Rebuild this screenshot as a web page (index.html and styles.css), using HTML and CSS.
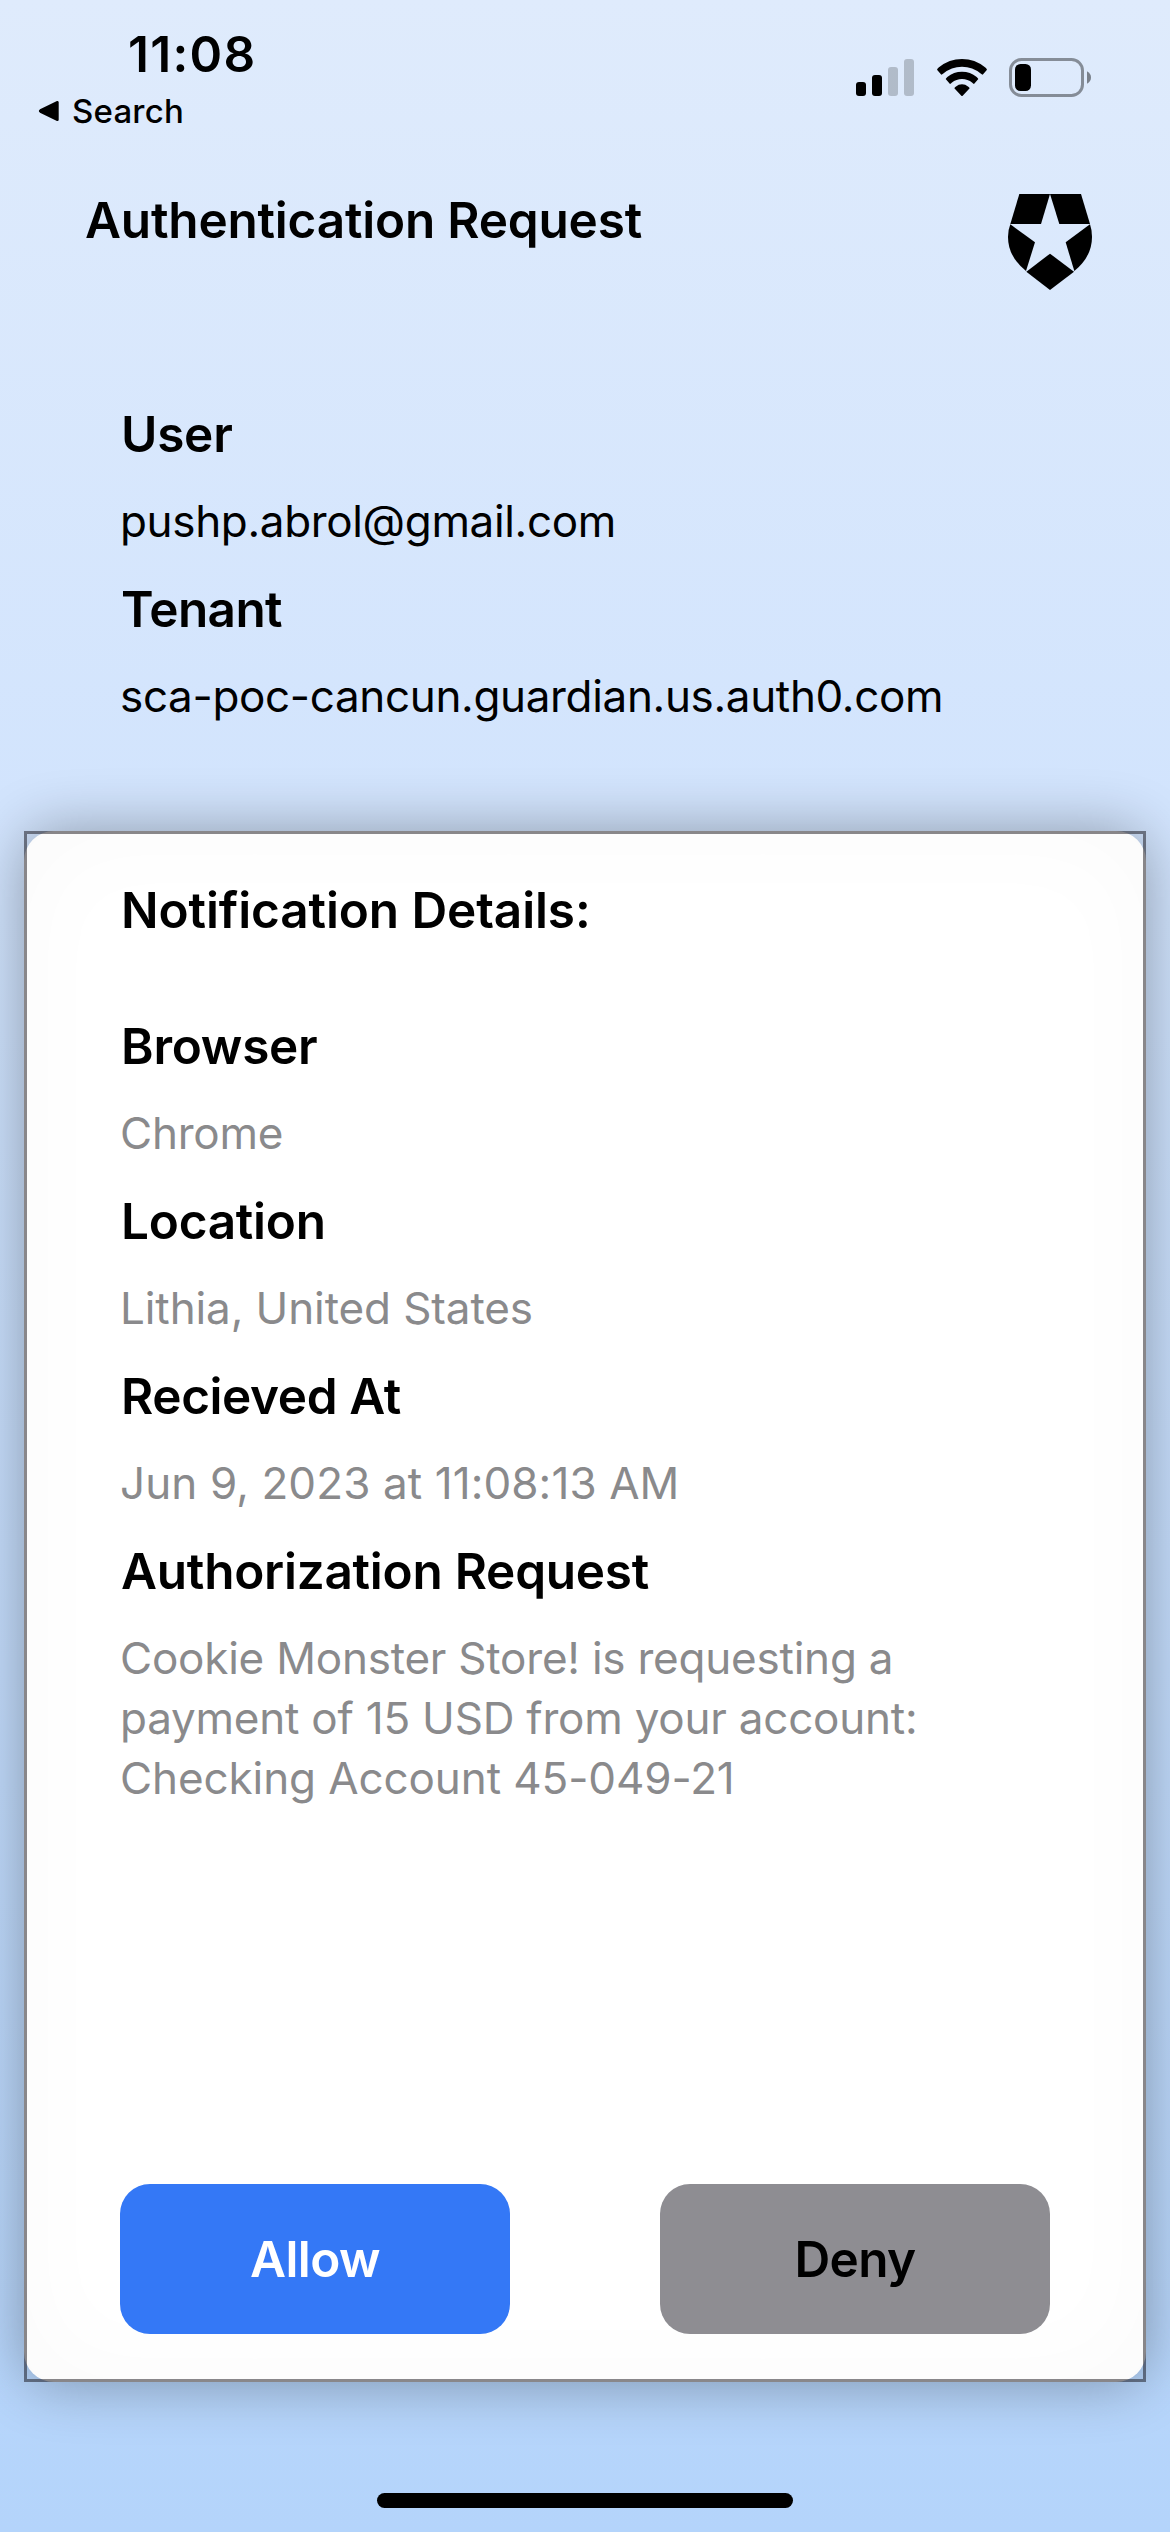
FILE: index.html
```html
<!DOCTYPE html>
<html lang="en">
<head>
  <meta charset="utf-8">
  <title>Authentication Request</title>
  <link rel="stylesheet" href="styles.css">
</head>
<body>
  <div class="screen">
    <div class="status">
      <div class="status-left">
        <div class="time">11:08</div>
        <div class="back">
          <svg class="back-arrow" viewBox="0 0 22 22"><path d="M19.5 2.2V19.8L2.5 11.6Q1.6 11 2.5 10.4Z" fill="#000" stroke="#000" stroke-width="2.4" stroke-linejoin="round"/></svg>
          <span>Search</span>
        </div>
      </div>
      <div class="status-icons">
        <svg class="signal" viewBox="0 0 58 37">
          <rect x="0" y="23" width="10" height="14" rx="3"/>
          <rect x="16" y="16" width="10" height="21" rx="3"/>
          <rect x="32" y="8" width="10" height="29" rx="3" opacity=".2"/>
          <rect x="48" y="0" width="10" height="37" rx="3" opacity=".2"/>
        </svg>
        <svg class="wifi" viewBox="0 0 150 111">
          <path d="M0 32Q2 28 6 25Q36 0 75 0Q114 0 144 25Q148 28 150 32L137 47Q134 46 132 44Q107 23 75 23Q43 23 18 44Q16 46 13 47Z"/>
          <path d="M26 60Q28 57 31 54Q50 38 75 38Q100 38 119 54Q122 57 124 60L111 75Q108 73 106 71Q92 60 75 60Q58 60 44 71Q42 73 39 75Z"/>
          <path d="M52 88Q53 85 56 83Q65 76 75 76Q85 76 94 83Q97 85 98 88L77 110Q75 112 73 110Z"/>
        </svg>
        <svg class="battery" viewBox="0 0 82 39">
          <rect x="1.5" y="1.5" width="72" height="36" rx="11" fill="none" stroke="#000" stroke-opacity=".4" stroke-width="3"/>
          <rect x="6" y="6" width="16" height="27" rx="5.5"/>
          <path d="M78 13.3Q82 15.5 82 19.5Q82 23.5 78 25.7Z" opacity=".45"/>
        </svg>
      </div>
    </div>

    <header class="header">
      <h1 class="heading title">Authentication Request</h1>
      <svg class="logo" viewBox="0 0 252 288">
        <path d="M34 0H126L99 90H7Z"/>
        <path d="M126 0H219L246 90H154Z"/>
        <path d="M7 91L81 145L54 231Q0 188 0 128Q0 108 7 91Z"/>
        <path d="M246 91L173 145L199 231Q252 188 252 128Q252 108 246 91Z"/>
        <path d="M126 179L198 233L126 288L55 233Z"/>
      </svg>
    </header>

    <section class="account fields">
      <h2 class="heading">User</h2>
      <p class="value email">pushp.abrol@gmail.com</p>
      <h2 class="heading tenant">Tenant</h2>
      <p class="value domain">sca-poc-cancun.guardian.us.auth0.com</p>
    </section>

    <main class="card">
      <h2 class="heading card-title">Notification Details:</h2>
      <div class="fields details">
        <h3 class="heading">Browser</h3>
        <p class="value">Chrome</p>
        <h3 class="heading">Location</h3>
        <p class="value place">Lithia, United States</p>
        <h3 class="heading received">Recieved At</h3>
        <p class="value date">Jun 9, 2023 at 11:08:13 AM</p>
        <h3 class="heading">Authorization Request</h3>
        <p class="value">Cookie Monster Store! is requesting a<br>payment of 15 USD from your account:<br><span class="number">Checking Account 45-049-21</span></p>
      </div>
      <div class="actions">
        <button class="button allow">Allow</button>
        <button class="button deny">Deny</button>
      </div>
    </main>

    <div class="home-indicator"></div>
  </div>
</body>
</html>
```

FILE: styles.css
```css
* {
  box-sizing: border-box;
  margin: 0;
}

body {
  font-family: Inter, "Liberation Sans", sans-serif;
  color: #000;
}

.screen {
  display: flex;
  flex-direction: column;
  width: 1170px;
  height: 2532px;
  overflow: hidden;
  background: linear-gradient(#dfebfc 0, #d2e4fd 800px, #b4d4fb 100%);
}

.status {
  display: flex;
  justify-content: space-between;
  height: 187px;
  padding: 24px 79px 0 38px;
}

.time {
  padding-left: 90px;
  font-size: 49.5px;
  font-weight: 600;
  line-height: 60px;
  letter-spacing: 1.3px;
}

.back {
  display: flex;
  align-items: center;
  gap: 12px;
  margin-top: 7px;
  font-size: 33px;
  font-weight: 500;
  line-height: 40px;
  letter-spacing: .2px;
}

.back-arrow {
  width: 22px;
  height: 22px;
}

.status-icons {
  display: flex;
  align-items: flex-start;
  padding-top: 34px;
}

.signal {
  width: 58px;
  height: 37px;
  margin-top: 1px;
}

.wifi {
  width: 50px;
  height: 37px;
  margin: 1px 22px 0 23px;
}

.battery {
  width: 82px;
  height: 39px;
}

.header {
  display: flex;
  justify-content: space-between;
  height: 213px;
  padding: 0 78px 0 85px;
}

.heading {
  padding: 1px 0 0 1px;
  font-size: 49.5px;
  font-weight: 600;
  line-height: 66px;
  letter-spacing: -.25px;
}

.title {
  padding: 0;
  letter-spacing: -.2px;
}

.logo {
  width: 84px;
  height: 96px;
  margin-top: 7px;
}

.fields {
  display: flex;
  flex-direction: column;
  gap: 24px;
}

.account {
  height: 431px;
  padding-left: 120px;
}

.value {
  font-size: 44px;
  line-height: 60px;
  letter-spacing: -.22px;
}

.email,
.domain {
  letter-spacing: -.34px;
}

.tenant {
  letter-spacing: -.6px;
}

.card {
  position: relative;
  display: flex;
  flex-direction: column;
  height: 1551px;
  margin: 0 24px;
  padding: 45px 96px 48px;
  border-radius: 30px;
  background: #fff;
  box-shadow: 0 0 60px rgba(0, 0, 0, .33), inset 0 0 110px rgba(0, 0, 0, .022);
}

/* Square frame drawn over the rounded panel */
.card::after {
  content: "";
  position: absolute;
  inset: 0;
  border: 3px solid rgba(10, 7, 12, .48);
  pointer-events: none;
}

.card-title {
  letter-spacing: -.1px;
}

.details {
  margin-top: 69px;
}

.details .value {
  color: #8a8a8c;
}

.details .place,
.details .number {
  letter-spacing: -.1px;
}

.details .date {
  letter-spacing: .1px;
}

.received {
  letter-spacing: -.4px;
}

.actions {
  display: flex;
  justify-content: space-between;
  margin-top: auto;
}

.button {
  width: 390px;
  height: 150px;
  padding: 0;
  border: 0;
  border-radius: 30px;
  font: 600 49.5px/66px Inter, "Liberation Sans", sans-serif;
  letter-spacing: -.6px;
}

.allow {
  background: #3478f6;
  color: #fff;
}

.deny {
  background: #8e8d92;
  color: #000;
}

.home-indicator {
  width: 416px;
  height: 15px;
  margin: 111px auto 0;
  border-radius: 7.5px;
  background: #000;
}
```
